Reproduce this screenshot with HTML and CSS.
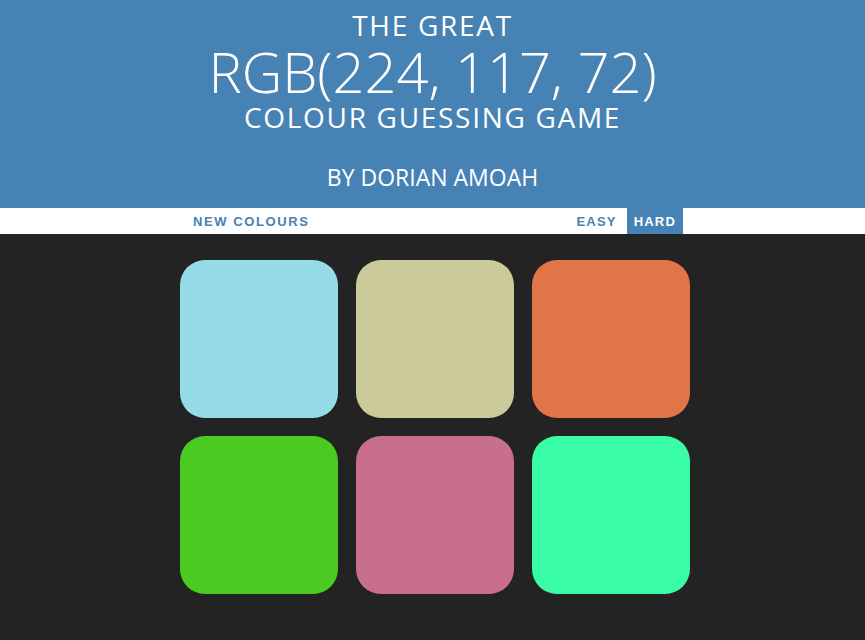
FILE: index.html
```html
<!DOCTYPE html>
<html>
<head>
<meta charset="utf-8">
<link rel="stylesheet" href="styles.css">
</head>
<body>
<header class="header">
  <div class="line small">THE GREAT</div>
  <div class="line big">RGB(224, 117, 72)</div>
  <div class="line small">COLOUR GUESSING GAME</div>
  <div class="line author">BY DORIAN AMOAH</div>
</header>
<nav class="stripe">
  <div class="stripe-inner">
    <button class="btn wide">New Colours</button>
    <div class="modes">
      <button class="btn">Easy</button>
      <button class="btn selected">Hard</button>
    </div>
  </div>
</nav>
<main class="board">
  <div class="square" style="background: rgb(149, 220, 232)"></div>
  <div class="square" style="background: rgb(203, 202, 154)"></div>
  <div class="square" style="background: rgb(224, 117, 72)"></div>
  <div class="square" style="background: rgb(75, 203, 34)"></div>
  <div class="square" style="background: rgb(199, 111, 140)"></div>
  <div class="square" style="background: rgb(56, 253, 166)"></div>
</main>
</body>
</html>
```
FILE: styles.css
```css
html, body {
  margin: 0;
  padding: 0;
}
body {
  background: #232323;
  font-family: "Open Sans", sans-serif;
}
.header {
  background: #4682b4;
  color: #fff;
  text-align: center;
  height: 208px;
  box-sizing: border-box;
  padding-top: 11px;
  font-weight: 400;
}
.line {
  line-height: 1;
}
.small {
  font-size: 28px;
  height: 32px;
  letter-spacing: 1.7px;
}
.big {
  font-size: 56px;
  height: 60px;
  font-weight: 300;
  letter-spacing: 0;
}
.author {
  font-size: 23px;
  margin-top: 31px;
}
.stripe {
  background: #fff;
  height: 26px;
}
.stripe-inner {
  width: 497px;
  margin: 0 auto;
  padding-left: 4px;
  display: flex;
  justify-content: space-between;
  height: 26px;
}
.modes {
  display: flex;
  gap: 3px;
}
.btn {
  border: none;
  background: none;
  color: #4682b4;
  font-family: "Liberation Sans", Arial, sans-serif;
  font-weight: 700;
  font-size: 13px;
  letter-spacing: 1.2px;
  text-transform: uppercase;
  padding: 0 7px;
  height: 26px;
  margin: 0;
}
.wide {
  letter-spacing: 1.6px;
}
.selected {
  background: #4682b4;
  color: #fff;
}
.board {
  display: grid;
  grid-template-columns: repeat(3, 158px);
  gap: 18px 17.6px;
  justify-content: center;
  padding: 26px 0 0 5px;
}
.square {
  width: 158px;
  height: 158px;
  border-radius: 25px;
}
```
